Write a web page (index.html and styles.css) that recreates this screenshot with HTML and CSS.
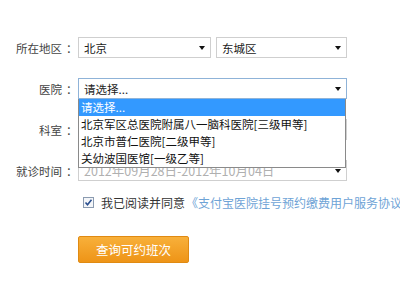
FILE: index.html
```html
<!DOCTYPE html>
<html lang="zh-CN">
<head>
<meta charset="utf-8">
<link rel="stylesheet" href="styles.css">
</head>
<body>
<div class="form">
  <div class="row">
    <div class="label">所在地区<span class="colon">：</span></div>
    <div class="select w1"><span>北京</span><i class="arrow"></i></div>
    <div class="select w2"><span>东城区</span><i class="arrow"></i></div>
  </div>
  <div class="row">
    <div class="label">医院<span class="colon">：</span></div>
    <div class="field">
      <div class="select wide focus"><span>请选择...</span><i class="arrow"></i></div>
      <ul class="dropdown">
        <li class="active">请选择...</li>
        <li>北京军区总医院附属八一脑科医院[三级甲等]</li>
        <li>北京市普仁医院[二级甲等]</li>
        <li>关幼波国医馆[一级乙等]</li>
      </ul>
    </div>
  </div>
  <div class="row">
    <div class="label">科室<span class="colon">：</span></div>
    <div class="select wide"><span></span><i class="arrow"></i></div>
  </div>
  <div class="row">
    <div class="label">就诊时间<span class="colon">：</span></div>
    <div class="select wide date"><span>2012年09月28日-2012年10月04日</span><i class="arrow"></i></div>
  </div>
  <div class="agree">
    <span class="check"><svg width="9" height="9" viewBox="0 0 9 9"><path d="M1.5 4.5 L3.5 6.8 L7.5 1.8" fill="none" stroke="#2a4f8f" stroke-width="1.6"/></svg></span>
    <span class="agree-text">我已阅读并同意</span>
    <span class="link">《支付宝医院挂号预约缴费用户服务协议》</span>
  </div>
  <div class="actions">
    <button class="btn">查询可约班次</button>
  </div>
</div>
</body>
</html>
```
FILE: styles.css
```css
html, body {
  margin: 0;
  padding: 0;
  background: #fff;
  overflow: hidden;
}
body {
  font-family: "Noto Sans CJK SC", "Noto Sans", sans-serif;
  font-size: 11.5px;
  color: #333;
  width: 400px;
  height: 300px;
}
.form {
  padding-top: 37px;
}
.row {
  display: flex;
  align-items: center;
  height: 21px;
  margin-bottom: 20px;
}
.label {
  width: 78px;
  flex: none;
  text-align: right;
  color: #444;
  font-size: 11.5px;
  padding-right: 1px;
  box-sizing: border-box;
  white-space: nowrap;
}
.colon {
  display: inline-block;
  width: 15px;
  text-align: center;
  padding-left: 4px;
  box-sizing: border-box;
}
.field {
  position: relative;
}
.select {
  box-sizing: border-box;
  height: 21px;
  border: 1px solid #cfcfcf;
  background: #fff;
  display: flex;
  align-items: center;
  justify-content: space-between;
  padding-left: 5px;
  color: #222;
  white-space: nowrap;
  overflow: hidden;
}
.w1 { width: 133px; }
.w2 { width: 131px; margin-left: 5px; }
.wide { width: 269px; }
.focus { border-color: #8fb3d8; }
.date span { color: #b0b0b0; font-size: 12.5px; }
.arrow {
  width: 0;
  height: 0;
  border-left: 3px solid transparent;
  border-right: 3px solid transparent;
  border-top: 4px solid #111;
  margin-right: 5px;
  flex: none;
}
.dropdown {
  position: absolute;
  top: 21px;
  left: 0;
  width: 268px;
  box-sizing: border-box;
  margin: 0;
  padding: 0;
  list-style: none;
  background: #fff;
  border: 1px solid #8a8a8a;
  border-top: 0;
  z-index: 2;
}
.dropdown li {
  height: 17px;
  line-height: 17px;
  padding-left: 2px;
  color: #111;
  white-space: nowrap;
}
.dropdown li.active {
  background: #3399ff;
  color: #fff;
}
.agree {
  display: flex;
  align-items: center;
  margin-left: 83px;
  margin-top: -7px;
  height: 16px;
  font-size: 12px;
}
.check {
  width: 11px;
  height: 11px;
  box-sizing: border-box;
  border: 1px solid #8b9bb0;
  background: #f4f6f9;
  display: flex;
  align-items: center;
  justify-content: center;
  flex: none;
}
.agree-text {
  margin-left: 7px;
  color: #333;
  white-space: nowrap;
}
.link {
  margin-left: 1px;
  color: #6ea3d6;
  white-space: nowrap;
}
.actions {
  margin-top: 26px;
  margin-left: 78px;
}
.btn {
  width: 111px;
  height: 27px;
  border: 1px solid #e08a12;
  border-radius: 2px;
  background: linear-gradient(#f8b03a, #ee9417);
  color: #fff;
  font-family: "Noto Sans CJK SC", "Noto Sans", sans-serif;
  font-size: 12.5px;
  padding: 0;
}
```
